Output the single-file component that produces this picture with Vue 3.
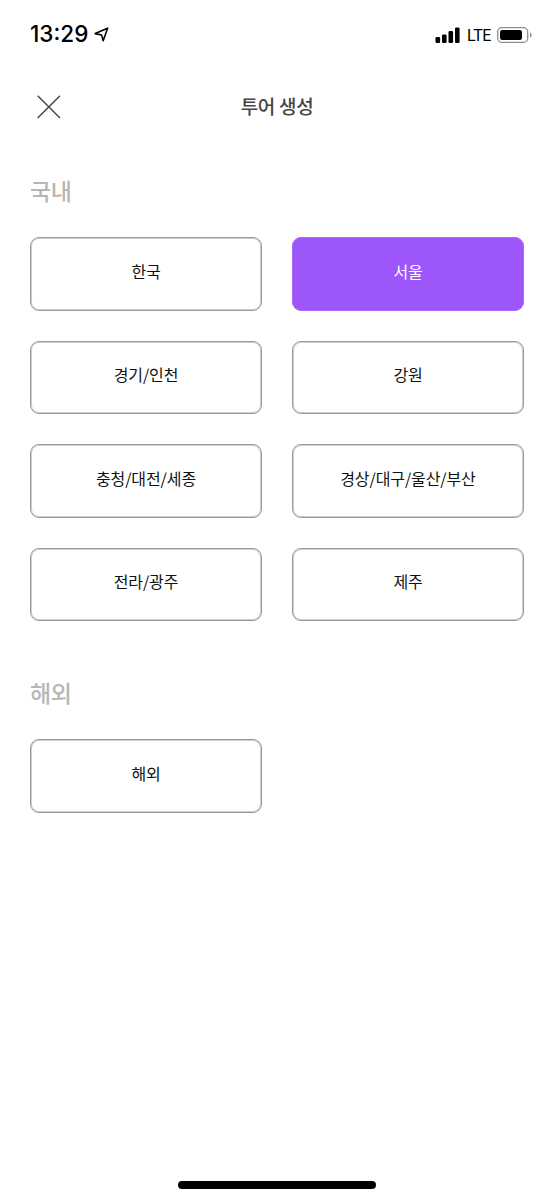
<script setup>
const domestic = [
  { label: '한국' },
  { label: '서울', active: true },
  { label: '경기/인천' },
  { label: '강원' },
  { label: '충청/대전/세종' },
  { label: '경상/대구/울산/부산' },
  { label: '전라/광주' },
  { label: '제주' }
]
const overseas = [{ label: '해외' }]
</script>

<template>
  <div class="screen">
    <header class="status">
      <div class="status-left">
        <span class="time">13:29</span>
        <svg class="arrow" width="15" height="15" viewBox="0 0 15 15">
          <path d="M1.2 6.6 L13.6 1.2 L9.2 13.8 L7.6 8 Z" fill="none" stroke="#000" stroke-width="1.6" stroke-linejoin="round" />
        </svg>
      </div>
      <div class="status-right">
        <svg width="26" height="16" viewBox="0 0 26 16">
          <rect x="0.5" y="10" width="4.6" height="6" rx="1.2" fill="#000" />
          <rect x="7" y="7.5" width="4.6" height="8.5" rx="1.2" fill="#000" />
          <rect x="13.5" y="4" width="4.6" height="12" rx="1.2" fill="#000" />
          <rect x="20" y="0.5" width="4.6" height="15.5" rx="1.2" fill="#000" />
        </svg>
        <span class="lte">LTE</span>
        <svg width="35" height="16" viewBox="0 0 35 16">
          <rect x="0.7" y="0.7" width="30" height="14.6" rx="4" fill="none" stroke="#8e8e8e" stroke-width="1.3" />
          <rect x="3" y="3" width="22" height="10" rx="2.2" fill="#000" />
          <path d="M33 5.5 C34.3 6 34.6 7 34.6 8 C34.6 9 34.3 10 33 10.5 Z" fill="#8e8e8e" />
        </svg>
      </div>
    </header>

    <nav class="nav">
      <svg class="close" width="24" height="24" viewBox="0 0 24 24">
        <path d="M0.7 0.7 L23 23 M23 0.7 L0.7 23" stroke="#444" stroke-width="1.4" fill="none" />
      </svg>
      <h1 class="title">투어 생성</h1>
    </nav>

    <section class="section domestic">
      <h2 class="heading">국내</h2>
      <div class="grid">
        <button v-for="item in domestic" :key="item.label" class="tile" :class="{ active: item.active }">{{ item.label }}</button>
      </div>
    </section>

    <section class="section overseas">
      <h2 class="heading">해외</h2>
      <div class="grid">
        <button v-for="item in overseas" :key="item.label" class="tile">{{ item.label }}</button>
      </div>
    </section>

    <div class="home-wrap"><div class="home"></div></div>
  </div>
</template>

<style>
html, body { margin: 0; background: #fff; }
</style>

<style scoped>
.screen {
  width: 554px;
  height: 1200px;
  background: #fff;
  display: flex;
  flex-direction: column;
  font-family: "Noto Sans CJK KR", "Noto Sans", sans-serif;
  overflow: hidden;
}
.status {
  height: 32px;
  padding: 18px 22px 0 30px;
  display: flex;
  justify-content: space-between;
  align-items: center;
}
.status-left { display: flex; align-items: center; gap: 6px; }
.time {
  font-family: Inter, "Liberation Sans", sans-serif;
  font-size: 22.5px;
  font-weight: 500;
  color: #000;
  line-height: 32px;
}
.arrow { margin-top: 0; }
.status-right { display: flex; align-items: center; gap: 5px; padding-top: 2px; }
.lte {
  font-family: Roboto, "Liberation Sans", sans-serif;
  font-size: 16px;
  color: #000;
  letter-spacing: -0.4px;
  margin: 0 1px;
}
.nav {
  height: 46px;
  margin-top: 33px;
  position: relative;
  display: flex;
  align-items: center;
  justify-content: center;
}
.close { position: absolute; left: 37px; top: 12px; }
.title {
  margin: 0;
  font-size: 19px;
  font-weight: 500;
  color: #444;
  line-height: 24px;
  letter-spacing: -0.3px;
}
.section { padding: 0 30px; }
.domestic { margin-top: 44px; }
.overseas { margin-top: 54px; }
.heading {
  margin: 0;
  height: 64px;
  font-size: 23px;
  font-weight: 500;
  color: #b6b6b6;
  line-height: 34px;
  letter-spacing: -0.3px;
}
.grid {
  display: grid;
  grid-template-columns: 232px 232px;
  column-gap: 30px;
  row-gap: 30px;
  grid-auto-rows: 73.5px;
}
.tile {
  box-sizing: border-box;
  border: 1px solid #999;
  box-shadow: inset 0 0 0 1px #cfcfcf;
  border-radius: 9px;
  background: #fff;
  color: #111;
  font-family: inherit;
  font-size: 16px;
  font-weight: 400;
  letter-spacing: -0.1px;
  padding: 0 0 6px;
}
.tile.active {
  background: #9c56f9;
  border-color: #a568f8;
  box-shadow: none;
  color: #fff;
}
.home-wrap {
  margin-top: auto;
  padding-bottom: 11px;
  display: flex;
  justify-content: center;
}
.home {
  width: 198px;
  height: 8px;
  border-radius: 4px;
  background: #000;
}
</style>
